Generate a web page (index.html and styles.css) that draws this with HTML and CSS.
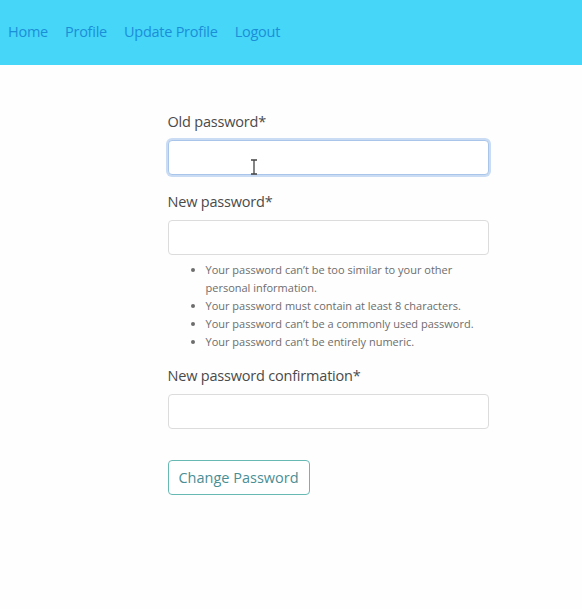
FILE: index.html
```html
<!DOCTYPE html>
<html>
<head>
<meta charset="utf-8">
<link rel="stylesheet" href="styles.css">
</head>
<body>
<nav class="navbar">
  <a href="#" class="nav-link">Home</a>
  <a href="#" class="nav-link">Profile</a>
  <a href="#" class="nav-link">Update Profile</a>
  <a href="#" class="nav-link">Logout</a>
</nav>
<main class="content">
  <form class="form">
    <div class="field">
      <label class="label">Old password*</label>
      <div class="input-wrap">
        <input type="password" class="input focused">
        <svg class="ibeam" width="8" height="16" viewBox="0 0 8 16"><path d="M1 1h6M4 1v14M1 15h6" stroke="#444" stroke-width="1.3" fill="none"/></svg>
      </div>
    </div>
    <div class="field">
      <label class="label">New password*</label>
      <input type="password" class="input">
      <ul class="help">
        <li>Your password can’t be too similar to your other personal information.</li>
        <li>Your password must contain at least 8 characters.</li>
        <li>Your password can’t be a commonly used password.</li>
        <li>Your password can’t be entirely numeric.</li>
      </ul>
    </div>
    <div class="field">
      <label class="label">New password confirmation*</label>
      <input type="password" class="input">
    </div>
    <button type="button" class="btn">Change Password</button>
  </form>
</main>
</body>
</html>
```
FILE: styles.css
```css
* { box-sizing: border-box; }
body {
  margin: 0;
  font-family: "Open Sans", "Noto Sans", sans-serif;
  background: #fefefe;
  color: #444;
}
.navbar {
  height: 65px;
  background: #46d6f8;
  display: flex;
  align-items: center;
  gap: 17px;
  padding: 0 8px 2px;
}
.nav-link {
  color: #1b8ed8;
  text-decoration: none;
  font-size: 14.5px;
  letter-spacing: -0.25px;
}
.content {
  display: flex;
  justify-content: center;
  padding-top: 47px;
  padding-left: 74px;
}
.form {
  width: 321px;
  display: flex;
  flex-direction: column;
}
.field {
  display: flex;
  flex-direction: column;
  margin-bottom: 17px;
}
.label {
  font-size: 14.5px;
  color: #4a4a4a;
  margin-bottom: 8px;
  line-height: 20px;
  letter-spacing: -0.2px;
}
.input-wrap { position: relative; }
.input {
  width: 100%;
  height: 35px;
  border: 1px solid #dcdcdc;
  border-radius: 4px;
  background: #fff;
  outline: none;
}
.input.focused {
  border-color: #a9c6ea;
  box-shadow: 0 0 0 2px #c9dcf4;
}
.ibeam {
  position: absolute;
  left: 82px;
  top: 19px;
}
.help {
  margin: 6px 0 -2px;
  padding-left: 38px;
  font-size: 11px;
  line-height: 18px;
  color: #6d6d6d;
  list-style: disc;
}
.btn {
  align-self: flex-start;
  margin-top: 14px;
  width: 142px;
  height: 35px;
  border: 1.5px solid #67b9b4;
  border-radius: 4px;
  background: #fff;
  color: #4a8e95;
  font-family: inherit;
  font-size: 14.5px;
}
```
